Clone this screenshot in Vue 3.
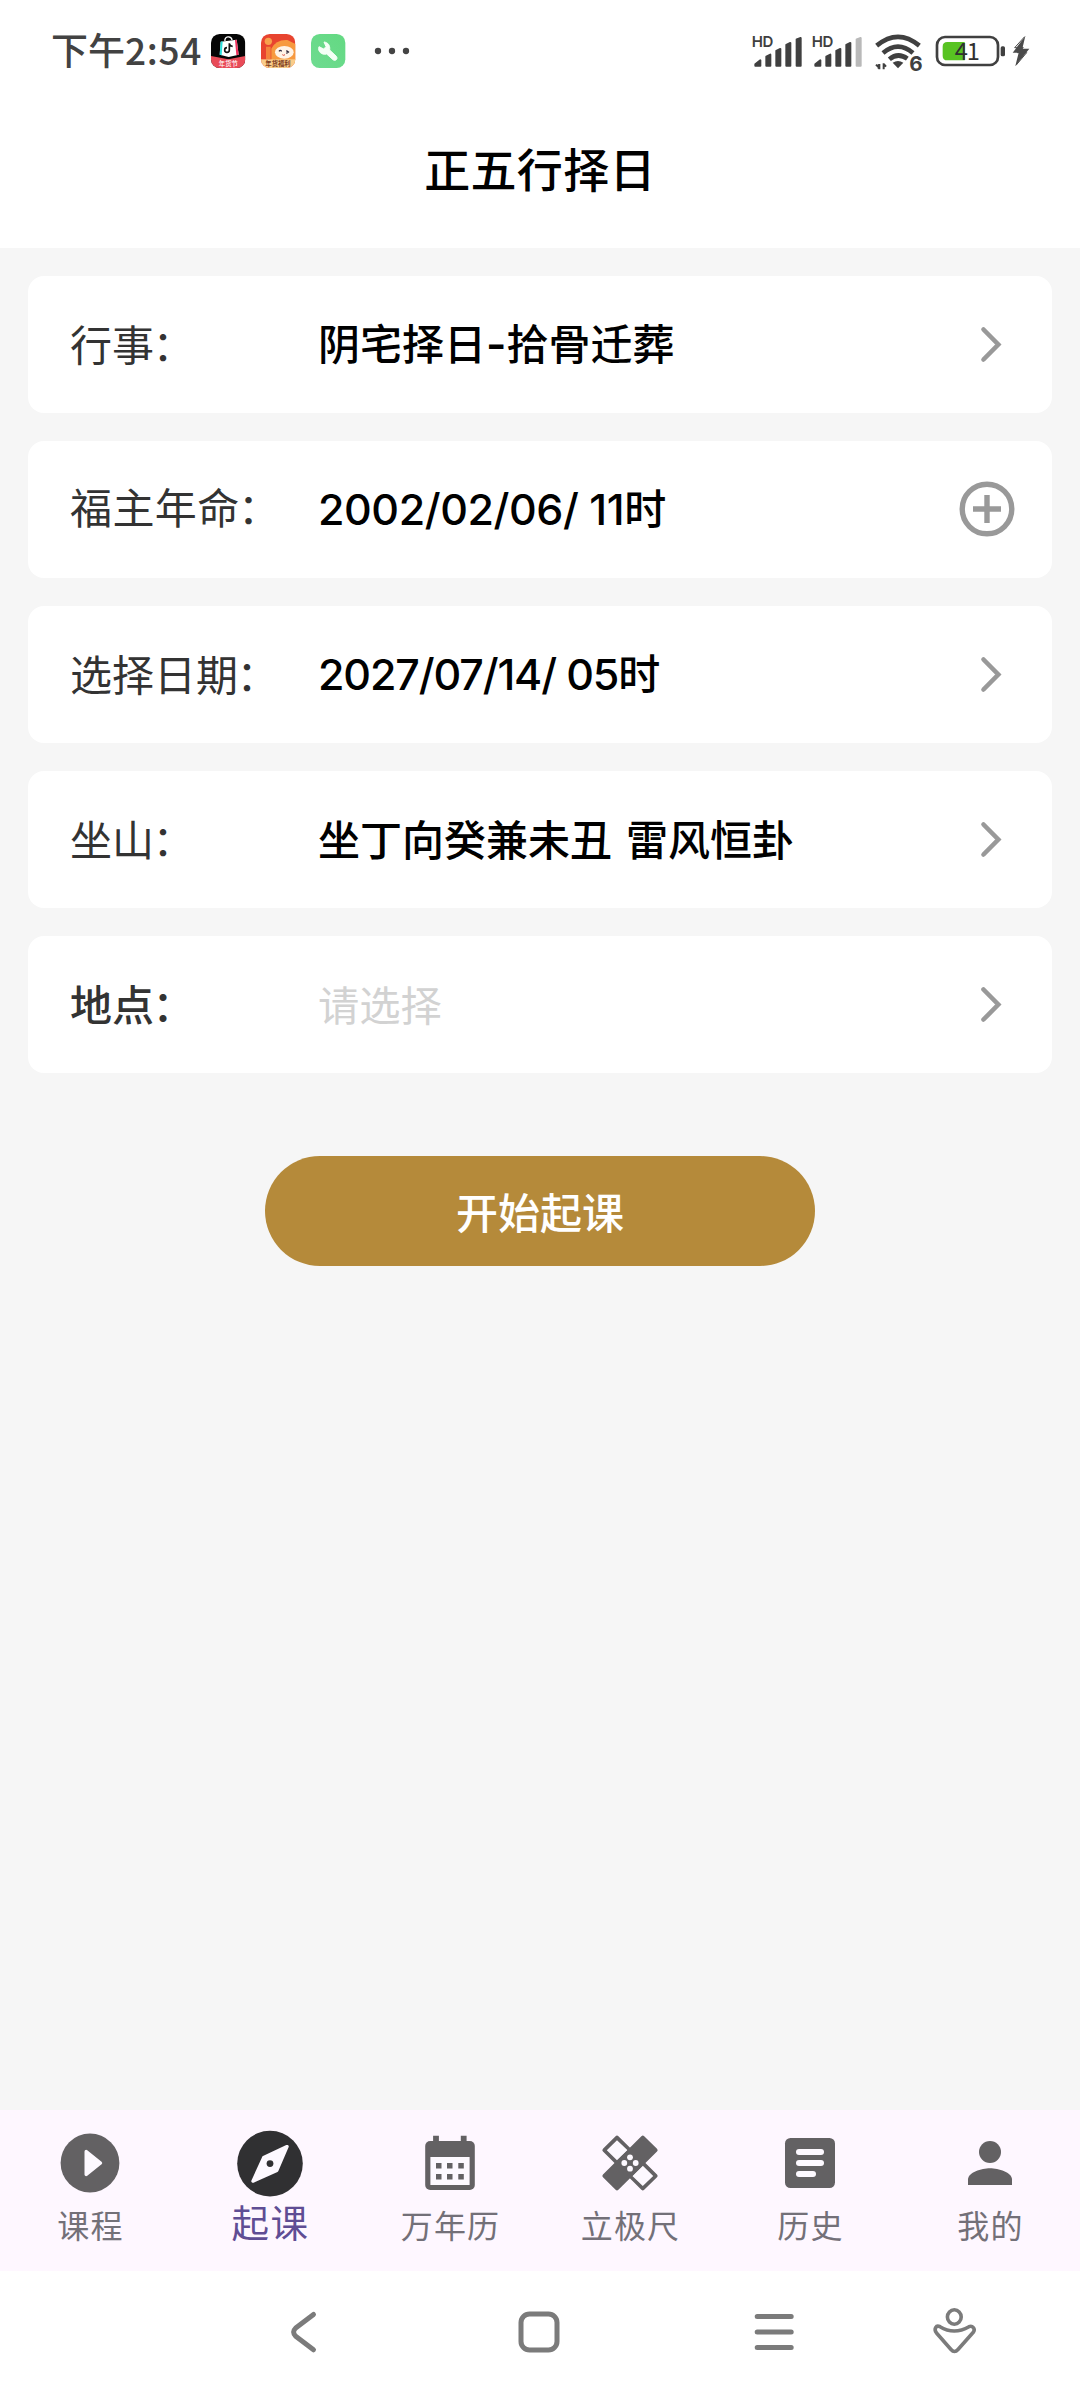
<script setup>
const rows = [
  { label: '行事', value: [{ t: '阴宅择日', k: 'han' }, { t: '-', k: 'dash' }, { t: '拾骨迁葬', k: 'han' }], icon: 'chevron' },
  { label: '福主年命', value: [{ t: '2002/02/06/ 11', k: 'num' }, { t: '时', k: 'han' }], icon: 'plus', cls: 'owner' },
  { label: '选择日期', value: [{ t: '2027/07/14/ 05', k: 'num' }, { t: '时', k: 'han' }], icon: 'chevron', cls: 'date' },
  { label: '坐山', value: [{ t: '坐丁向癸兼未丑 雷风恒卦', k: 'han' }], icon: 'chevron' },
  { label: '地点', value: [{ t: '请选择', k: 'han' }], icon: 'chevron', cls: 'place' },
]
const tabs = [
  { id: 'course', label: '课程' },
  { id: 'compass', label: '起课', active: true },
  { id: 'calendar', label: '万年历' },
  { id: 'ruler', label: '立极尺' },
  { id: 'history', label: '历史' },
  { id: 'me', label: '我的' },
]
</script>

<template>
  <div class="screen">
    <div class="status">
      <span class="time">下午<span class="clock">2:54</span></span>
      <svg class="apps" width="215" height="90" viewBox="525 0 645 270">
        <defs>
          <clipPath id="a1"><rect x="543" y="72" width="103" height="102" rx="26" /></clipPath>
          <clipPath id="a2"><rect x="693" y="72" width="103" height="102" rx="26" /></clipPath>
          <linearGradient id="g3" x1="0" y1="1" x2="1" y2="0">
            <stop offset="0" stop-color="#6edb90" /><stop offset="1" stop-color="#63d982" />
          </linearGradient>
        </defs>
        <g clip-path="url(#a1)">
          <rect x="543" y="72" width="103" height="102" fill="#050505" />
          <path d="M543 138 L595 148 L646 138 V174 H543z" fill="#e94b58" />
          <path d="M572 95 L620 89 L626 134 L596 141 L569 134z" fill="#fff" />
          <path d="M572 95 L578 94 L575 136 L569 134z" fill="#27e0dd" />
          <path d="M615 90 L620 89 L626 134 L619 136z" fill="#f0305c" />
          <path d="M585 93 C582 78 604 76 606 90" fill="none" stroke="#fff" stroke-width="4" />
          <path d="M598 100 V120 A7 7 0 1 1 591 113 M598 101 Q600 109 608 109" fill="none" stroke="#111" stroke-width="5" />
          <text x="595" y="168" class="tiny" fill="#fff">年货节</text>
        </g>
        <g clip-path="url(#a2)">
          <rect x="693" y="72" width="103" height="102" fill="#e8442f" />
          <path d="M724 116 Q738 88 772 90 L800 104 V160 H724z" fill="#f79a3f" />
          <circle cx="715" cy="94" r="11" fill="#f8a04c" />
          <path d="M708 110 H722 V148 H708z" fill="#f4833c" />
          <rect x="693" y="148" width="103" height="28" fill="#f9cd8a" />
          <ellipse cx="763" cy="127" rx="28" ry="19" fill="#fff3e6" />
          <path d="M747 124 q4 -6 8 0 M769 122 l6 4 l-6 4" fill="none" stroke="#30283c" stroke-width="4" />
          <path d="M757 134 q4 4 8 0" fill="none" stroke="#d74435" stroke-width="3" />
          <text x="744" y="168" class="tiny bold" fill="#7c3a20">年货福利</text>
        </g>
        <rect x="843" y="72" width="103" height="102" rx="26" fill="url(#g3)" />
        <path d="M882 96 L888 110 L881 117 L867 110 C862 124 875 136 890 132 L909 149 C916 155 925 147 919 139 L899 120 C901 105 893 97 882 96z" fill="#f4fff6" stroke="#f4fff6" stroke-width="3" stroke-linejoin="round" />
        <g fill="#444"><circle cx="1044" cy="123" r="9.5" /><circle cx="1086" cy="123" r="9.5" /><circle cx="1128" cy="123" r="9.5" /></g>
      </svg>
      <svg class="signals" width="330" height="90" viewBox="0 0 990 270">
        <g fill="#404040">
          <text x="65" y="110" class="hd">HD</text>
          <text x="245" y="110" class="hd">HD</text>
          <g stroke="#404040" stroke-width="6" stroke-linejoin="round">
            <path d="M76 163 L91 151 V167 H76z M109 140 L121 134 V167 H109z M139 123 L151 117 V167 H139z M169 105 L181 99 V167 H169z M200 88 L212 84 V167 H200z" />
            <path d="M256 163 L271 151 V167 H256z M289 140 L301 134 V167 H289z M319 123 L331 117 V167 H319z M349 105 L361 99 V167 H349z" />
            <path d="M380 88 L392 84 V167 H380z" fill="#b9b9b9" stroke="#b9b9b9" />
          </g>
          <g fill="none" stroke="#404040" stroke-width="14">
            <path d="M440 107 Q504 54 568 107" /><path d="M459 129 Q504 91 549 129" /><path d="M478 148 Q504 126 532 146" />
          </g>
          <path d="M488 158 Q504 148 520 158 L504 175z" />
          <path d="M446 163 V176 M446 172 L438 164 M448 162 V178 M461 178 V160 M461 162 L468 170" fill="none" stroke="#404040" stroke-width="6" />
          <text x="538" y="184" class="six">6</text>
          <rect x="621" y="81" width="183" height="84" rx="24" fill="none" stroke="#404040" stroke-width="8" />
          <path d="M652 96 H704 V151 H652 Q638 151 638 137 V110 Q638 96 652 96z" fill="#58c322" />
          <rect x="812" y="109" width="13" height="30" rx="5" />
          <text x="710" y="149" class="level">41</text>
          <path d="M886 78 L848 128 H866 L856 168 L898 116 H877z" fill="#4b4b4b" />
          <path d="M884 80 L854 113 H880 L862 128 H890 L858 166" fill="none" stroke="#4b4b4b" stroke-width="3" />
        </g>
      </svg>
    </div>

    <header class="title">正五行择日</header>

    <main class="form">
      <div v-for="r in rows" :key="r.label" class="card" :class="r.cls">
        <span class="label">{{ r.label }}<span class="colon">：</span></span>
        <span class="value"><span v-for="s in r.value" :key="s.t" :class="s.k">{{ s.t }}</span></span>
        <svg v-if="r.icon === 'chevron'" class="chevron" width="30" height="50" viewBox="0 0 30 50">
          <path d="M7.5 9.5 L22.3 24.5 L7.5 39.5" />
        </svg>
        <svg v-else class="plus" width="60" height="60" viewBox="-30 -30 60 60">
          <circle r="24.8" /><path d="M-14 0 H14 M0 -14 V14" />
        </svg>
      </div>
      <button class="start">开始起课</button>
    </main>

    <nav class="tabs">
      <div v-for="t in tabs" :key="t.id" class="tab" :class="{ active: t.active }">
        <svg width="84" height="84" viewBox="-42 -42 84 84">
          <g v-if="t.id === 'course'">
            <circle r="29.4" class="ink" />
            <path d="M-3.8 -11.5 L10.5 0 L-3.8 11.5z" class="bg rounded" />
          </g>
          <g v-else-if="t.id === 'compass'" transform="translate(0 0.6)">
            <circle r="32.8" fill="#303032" />
            <path d="M17 -17 L-6.3 -6 L-17 17.5 L6.8 6.8z" class="bg rounded" />
            <circle r="3.4" fill="#303032" />
          </g>
          <g v-else-if="t.id === 'calendar'">
            <rect x="-24.8" y="-22" width="49.6" height="49" rx="5" class="ink" />
            <path d="M-16.9 -27.3 h5.8 v7 h-5.8z M10.8 -27.3 h5.8 v7 h-5.8z" class="ink" />
            <rect x="-19.6" y="-6" width="39.2" height="28" class="bg" />
            <path d="M-14 0h5.5v5.4h-5.5z M-3 0h5.5v5.4h-5.5z M8.3 0h5.5v5.4h-5.5z M-14 11h5.5v5.6h-5.5z M-3 11h5.5v5.6h-5.5z M8.3 11h5.5v5.6h-5.5z" class="ink" />
          </g>
          <g v-else-if="t.id === 'ruler'">
            <path d="M-13 -25.4 L-25.6 -12.8 L12.8 25.4 L25.6 12.9z" class="ink joined" />
            <path d="M-13 -22.7 L-2.4 -12.7 L-13 -2.7 L-23.2 -12.7z M12.8 2.7 L23.2 13 L12.8 23 L2.4 13z" class="bg" />
            <path d="M12.8 -25.4 L25.6 -12.8 L-13 25.4 L-25.6 12.9z" class="ink joined" />
            <g class="bg"><circle cy="-5.7" r="2.9" /><circle cx="-5.7" r="2.9" /><circle cx="5.7" r="2.9" /><circle cy="5.7" r="2.9" /></g>
          </g>
          <g v-else-if="t.id === 'history'">
            <rect x="-25" y="-25" width="50" height="50" rx="5.5" class="ink" />
            <g class="bg">
              <rect x="-14" y="-14" width="28" height="6" rx="3" />
              <rect x="-14" y="-3" width="28" height="6" rx="3" />
              <rect x="-14" y="8" width="20" height="6" rx="3" />
            </g>
          </g>
          <g v-else class="ink">
            <circle cy="-11" r="11" />
            <path d="M-22 22 V16.5 C-22 9.5 -8.5 5.3 0 5.3 S22 9.5 22 16.5 V22z" />
          </g>
        </svg>
        <span>{{ t.label }}</span>
      </div>
    </nav>

    <div class="system">
      <svg width="60" height="60" viewBox="-30 -30 60 60"><path d="M9.500 -17.500 L-8.300 -4 Q-12.500 0 -8.300 4.300 L9.500 17.800" /></svg>
      <svg width="60" height="60" viewBox="-30 -30 60 60"><rect x="-18" y="-18" width="36" height="36" rx="8.5" /></svg>
      <svg width="60" height="60" viewBox="-30 -30 60 60"><path d="M-16.8 -15.5 H17.2 M-16.8 0 H17.2 M-16.8 15.5 H17.2" /></svg>
      <svg class="thin" width="60" height="60" viewBox="-30 -30 60 60">
        <ellipse cx="0.3" cy="-15" rx="6.9" ry="7.2" />
        <path d="M-14 -5.3 Q0 3.2 15 -5.3 C18.5 -7 21.5 -3 19.5 0 L4 17.5 Q0.5 21.5 -3 17.5 L-17.5 1 C-20.5 -3 -18 -7.5 -14 -5.3z" />
      </svg>
    </div>
  </div>
</template>

<style>
body { margin: 0; background: #fff; }
</style>

<style scoped>
.screen { width: 1080px; height: 2400px; display: flex; flex-direction: column; background: #fff; font-family: "Noto Sans CJK SC", sans-serif; overflow: hidden; }
.status { height: 100px; display: flex; box-sizing: border-box; padding: 10px 20px 0 51px; color: #424242; }
.time { width: 154px; height: 82px; line-height: 79px; font-size: 37px; font-weight: 500; white-space: nowrap; }
.clock { letter-spacing: .7px; }
.signals { margin-left: 310px; }
.tiny { font-size: 19px; text-anchor: middle; font-weight: 500; }
.bold { font-weight: 700; }
.hd { font: 600 45px Inter, sans-serif; letter-spacing: -1px; }
.six { font: 700 62px Inter, sans-serif; }
.level { font: 400 71px "Noto Sans CJK SC", sans-serif; text-anchor: middle; letter-spacing: -4px; fill: #303030; }
.title { height: 148px; line-height: 135px; box-sizing: border-box; text-align: center; font-size: 46px; font-weight: 500; letter-spacing: .3px; color: #000; }
.form { flex: 1; background: #f6f6f6; padding: 28px; display: flex; flex-direction: column; align-items: center; }
.card { width: 1024px; height: 137px; margin-bottom: 28px; box-sizing: border-box; background: #fff; border-radius: 16px; display: flex; align-items: center; padding: 0 42px; flex: none; }
.label { width: 248px; font-size: 42px; line-height: 60px; color: #333; white-space: nowrap; margin-top: -4px; }
.colon { margin-left: -1.5px; }
.value { flex: 1; font-size: 42px; line-height: 60px; font-weight: 500; color: #000; white-space: pre; word-spacing: 4.5px; margin-top: -4px; }
.num { font-family: Inter, "Noto Sans CJK SC", sans-serif; font-size: 43px; word-spacing: 0; letter-spacing: -.45px; }
.dash { font-family: Inter, sans-serif; font-weight: 600; font-size: 44px; }
.owner .label { margin-top: -7px; letter-spacing: .4px; }
.owner .value { margin-top: -3px; }
.date .num { letter-spacing: -1.15px; }
.place .label { font-weight: 500; }
.place .value { font-weight: 400; font-size: 41.300px; color: #d2d2d2; }
.chevron { fill: none; stroke: #999; stroke-width: 4.6; stroke-linecap: round; margin-right: 4px; }
.plus { fill: none; stroke: #999; stroke-width: 5.4; margin: -1px -7px 0 0; }
.start { width: 550px; height: 110px; margin-top: 55px; border: 0; border-radius: 55px; background: #b58a3a; color: #fff; font: 500 42px/108px "Noto Sans CJK SC", sans-serif; padding: 0; }
.tabs { height: 161px; background: #fef7ff; display: flex; flex: none; }
.tab { width: 180px; display: flex; flex-direction: column; align-items: center; padding-top: 11px; box-sizing: border-box; color: #737078; font-size: 32px; letter-spacing: 1.2px; }
.tab span { line-height: 40px; margin-top: -1px; padding-left: 1px; }
.tab.active { color: #5f4d94; font-size: 37.5px; letter-spacing: 1.5px; }
.tab.active span { margin-top: -4px; }
.ink { fill: #636163; }
.bg { fill: #fdf9ff; }
.rounded { stroke: #fdf9ff; stroke-width: 3.4px; stroke-linejoin: round; }
.joined { stroke: #636163; stroke-width: 4px; stroke-linejoin: round; }
.system { height: 129px; flex: none; background: #fff; display: flex; padding: 31px 0 0 274px; box-sizing: border-box; gap: 175px; fill: none; stroke: #7b7b7b; stroke-width: 5; stroke-linecap: round; stroke-linejoin: round; }
.thin { stroke-width: 3.6px; margin-left: -55px; }
</style>
